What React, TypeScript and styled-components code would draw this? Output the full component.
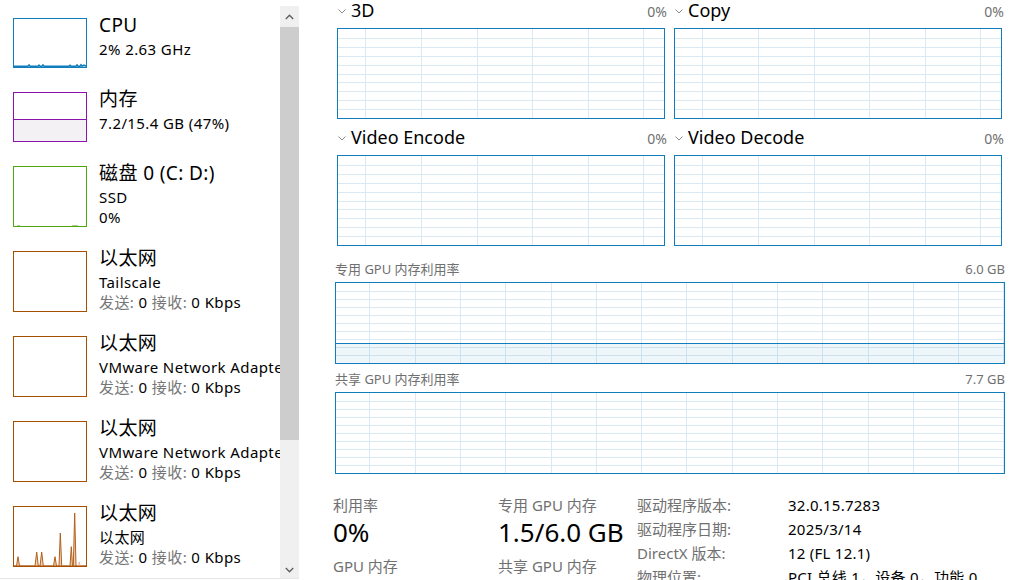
import React from "react";
import styled, { createGlobalStyle } from "styled-components";

const GlobalStyle = createGlobalStyle`
  html, body { margin: 0; padding: 0; background: #fff; }
  body {
    font-family: "Noto Sans", "Noto Sans CJK SC", sans-serif;
    color: #000;
    overflow: hidden;
  }
`;

const GRID = "#d9eaf4";
const BLUE = "#117dbb";

const Page = styled.div`
  display: flex;
  width: 1027px;
  height: 580px;
  overflow: hidden;
  background: #fff;
`;

/* ---------- Sidebar ---------- */

const Sidebar = styled.aside`
  display: flex;
  width: 299px;
  height: 572px;
  margin-top: 6px;
  border-bottom: 1px solid #e6e6e6;
  flex-shrink: 0;
`;

const List = styled.div`
  width: 280px;
  overflow: hidden;
  padding-top: 12px;
  display: flex;
  flex-direction: column;
  gap: 24px;
`;

const Item = styled.div`
  display: flex;
  align-items: flex-start;
  gap: 13px;
  padding-left: 13px;
  flex-shrink: 0;
`;

const Thumb = styled.div<{ $color: string; $h: number }>`
  width: 74px;
  height: ${(p) => p.$h}px;
  box-sizing: border-box;
  border: 1px solid ${(p) => p.$color};
  flex-shrink: 0;
  overflow: hidden;
  svg { display: block; }
`;

const Info = styled.div`
  margin-top: -6px;
  margin-left: -1px;
  display: flex;
  flex-direction: column;
  white-space: nowrap;
  min-width: 0;
`;

const Title = styled.div`
  font-size: 19px;
  line-height: 27px;
  letter-spacing: 0.4px;
`;

const Sub = styled.div`
  font-size: 15px;
  line-height: 20px;
  letter-spacing: 0.4px;
`;

const Muted = styled.span`
  color: #767676;
`;

const Scrollbar = styled.div`
  width: 19px;
  background: #f0f0f0;
  display: flex;
  flex-direction: column;
  flex-shrink: 0;
`;

const ScrollButton = styled.div<{ $h: number }>`
  height: ${(p) => p.$h}px;
  display: flex;
  align-items: center;
  justify-content: center;
  flex-shrink: 0;
`;

const ScrollThumb = styled.div`
  height: 413px;
  background: #cdcdcd;
  flex-shrink: 0;
`;

const ScrollSpacer = styled.div`
  flex: 1;
`;

/* ---------- Main ---------- */

const Main = styled.main`
  flex: 1;
  padding-left: 36px;
  display: flex;
  flex-direction: column;
`;

const Content = styled.div`
  width: 670px;
  display: flex;
  flex-direction: column;
`;

const EngineGrid = styled.div`
  display: grid;
  grid-template-columns: 330px 330px;
  column-gap: 7px;
  row-gap: 8px;
  padding-left: 2px;
`;

const Engine = styled.section`
  display: flex;
  flex-direction: column;
`;

const EngineHeader = styled.div`
  height: 28px;
  display: flex;
  align-items: baseline;
  line-height: 20px;
  svg { align-self: flex-start; margin-top: 9px; margin-left: 1px; flex-shrink: 0; }
`;

const EngineName = styled.span`
  font-size: 18px;
  margin-left: 5px;
  flex: 1;
`;

const Percent = styled.span`
  font-size: 14px;
  color: #707070;
`;

const GraphBox = styled.div<{ $w: number; $h: number }>`
  width: ${(p) => p.$w}px;
  height: ${(p) => p.$h}px;
  box-sizing: border-box;
  border: 1px solid ${BLUE};
  background: #fff;
  svg { display: block; }
`;

const MemSection = styled.section<{ $top: number }>`
  margin-top: ${(p) => p.$top}px;
  display: flex;
  flex-direction: column;
`;

const MemHeader = styled.div`
  display: flex;
  justify-content: space-between;
  font-size: 13px;
  line-height: 18px;
  color: #707070;
  margin-bottom: 4px;
`;

const Stats = styled.div`
  margin-top: 19px;
  margin-left: -2px;
  display: grid;
  grid-template-columns: 165px 139px auto;
  align-items: start;
`;

const StatCol = styled.div`
  display: flex;
  flex-direction: column;
  white-space: nowrap;
`;

const StatLabel = styled.div<{ $gap?: number }>`
  font-size: 15px;
  line-height: 24px;
  color: #707070;
  margin-top: ${(p) => p.$gap ?? 0}px;
`;

const StatValue = styled.div`
  font-size: 26px;
  line-height: 30px;
`;

const InfoGrid = styled.dl`
  margin: 0;
  display: grid;
  grid-template-columns: 151px auto;
  font-size: 15px;
  line-height: 24px;
  white-space: nowrap;
  dt { color: #707070; }
  dd { margin: 0; color: #000; letter-spacing: 0.25px; }
`;

/* ---------- Drawings ---------- */

const Chevron = ({ color = "#8a8a8a" }: { color?: string }) => (
  <svg width="8" height="5" viewBox="0 0 8 5">
    <polyline points="0.5,0.5 4,4 7.5,0.5" fill="none" stroke={color} strokeWidth="1" />
  </svg>
);

const ScrollChevron = ({ up }: { up?: boolean }) => (
  <svg width="9" height="6" viewBox="0 0 9 6">
    <polyline
      points={up ? "0.8,5 4.5,1.3 8.2,5" : "0.8,1 4.5,4.7 8.2,1"}
      fill="none"
      stroke="#606060"
      strokeWidth="1.4"
    />
  </svg>
);

type GridProps = {
  w: number;
  h: number;
  rows: number;
  colStart: number;
  colStep: number;
  fillFrac?: number;
};

const GridLines = ({ w, h, rows, colStart, colStep, fillFrac }: GridProps) => {
  const hs: number[] = [];
  for (let i = 1; i < rows; i++) hs.push(Math.round((h * i) / rows) + 0.5);
  const vs: number[] = [];
  for (let x = colStart; x < w; x += colStep) vs.push(Math.round(x) + 0.5);
  const fy = fillFrac !== undefined ? Math.round(h * (1 - fillFrac)) + 0.5 : null;
  return (
    <svg width={w} height={h} viewBox={`0 0 ${w} ${h}`}>
      {hs.map((y) => (
        <line key={"h" + y} x1={0} x2={w} y1={y} y2={y} stroke={GRID} strokeWidth="1" />
      ))}
      {vs.map((x) => (
        <line key={"v" + x} x1={x} x2={x} y1={0} y2={h} stroke={GRID} strokeWidth="1" />
      ))}
      {fy !== null && (
        <>
          <rect x={0} y={fy} width={w} height={h - fy} fill="rgba(17,125,187,0.07)" />
          <line x1={0} x2={w} y1={fy} y2={fy} stroke={BLUE} strokeWidth="1" />
        </>
      )}
    </svg>
  );
};

const CpuSpark = () => (
  <svg width="72" height="48" viewBox="0 0 72 48">
    <polyline
      points="0,47.2 14,47.2 15,46 16,47.2 24,47.2 25,46.2 26,47.2 28,47.2 29,46 30,47.2 55,47.2 56,46.3 57,47.2 62,47.2 63,46 64,47.2 66,47.2 67,45.8 68,47.2 70,46.2 72,47.2"
      fill="none"
      stroke={BLUE}
      strokeWidth="1.6"
    />
  </svg>
);

const MemFill = () => (
  <svg width="72" height="48" viewBox="0 0 72 48">
    <rect x="0" y="26" width="72" height="22" fill="#f3f1f4" />
    <line x1="0" x2="72" y1="26.5" y2="26.5" stroke="#8b12ae" strokeWidth="1" />
  </svg>
);

const DiskSpark = () => (
  <svg width="72" height="59" viewBox="0 0 72 59">
    <line x1="3" x2="6" y1="58.5" y2="58.5" stroke="#a6d38a" strokeWidth="1" />
    <line x1="58" x2="64" y1="58.5" y2="58.5" stroke="#a6d38a" strokeWidth="1" />
  </svg>
);

const EthSpikes = () => (
  <svg width="72" height="59" viewBox="0 0 72 59">
    <path
      d="M0,59 L2.5,59 L4,49.7 L5.5,59 L21,59 L22.7,45 L24.3,59 L26,59 L27.7,45 L29.3,59 L39.5,59 L41,49.7 L42.5,59 L45,59 L46.3,26 L47.7,59 L56,59 L57.3,39.7 L58.5,59 L59.3,59 L60.7,6 L62,59 L72,59 Z"
      fill="rgba(205,120,60,0.35)"
      stroke="#b3601a"
      strokeWidth="1"
      strokeLinejoin="round"
    />
    <path d="M64.5,59 L65.3,55 L66.2,59" fill="none" stroke="#e0a890" strokeWidth="0.8" />
  </svg>
);

/* ---------- Data ---------- */

const ETH = "#a74f01";

const NetLine = () => (
  <Sub>
    <Muted>发送:</Muted> 0 <Muted>接收:</Muted> 0 Kbps
  </Sub>
);

const engines = [
  { name: "3D", pct: "0%" },
  { name: "Copy", pct: "0%" },
  { name: "Video Encode", pct: "0%" },
  { name: "Video Decode", pct: "0%" },
];

export default function App() {
  return (
    <>
      <GlobalStyle />
      <Page>
        <Sidebar>
          <List>
            <Item>
              <Thumb $color={BLUE} $h={50}>
                <CpuSpark />
              </Thumb>
              <Info>
                <Title>CPU</Title>
                <Sub>2% 2.63 GHz</Sub>
              </Info>
            </Item>
            <Item>
              <Thumb $color="#8b12ae" $h={50}>
                <MemFill />
              </Thumb>
              <Info>
                <Title>内存</Title>
                <Sub>7.2/15.4 GB (47%)</Sub>
              </Info>
            </Item>
            <Item>
              <Thumb $color="#4da60c" $h={61}>
                <DiskSpark />
              </Thumb>
              <Info>
                <Title>磁盘 0 (C: D:)</Title>
                <Sub>SSD</Sub>
                <Sub>0%</Sub>
              </Info>
            </Item>
            <Item>
              <Thumb $color={ETH} $h={61} />
              <Info>
                <Title>以太网</Title>
                <Sub>Tailscale</Sub>
                <NetLine />
              </Info>
            </Item>
            <Item>
              <Thumb $color={ETH} $h={61} />
              <Info>
                <Title>以太网</Title>
                <Sub>VMware Network Adapter VMnet1</Sub>
                <NetLine />
              </Info>
            </Item>
            <Item>
              <Thumb $color={ETH} $h={61} />
              <Info>
                <Title>以太网</Title>
                <Sub>VMware Network Adapter VMnet8</Sub>
                <NetLine />
              </Info>
            </Item>
            <Item>
              <Thumb $color={ETH} $h={61}>
                <EthSpikes />
              </Thumb>
              <Info>
                <Title>以太网</Title>
                <Sub>以太网</Sub>
                <NetLine />
              </Info>
            </Item>
          </List>
          <Scrollbar>
            <ScrollButton $h={21}>
              <ScrollChevron up />
            </ScrollButton>
            <ScrollThumb />
            <ScrollSpacer />
            <ScrollButton $h={17}>
              <ScrollChevron />
            </ScrollButton>
          </Scrollbar>
        </Sidebar>

        <Main>
          <Content>
            <EngineGrid>
              {engines.map((e) => (
                <Engine key={e.name}>
                  <EngineHeader>
                    <Chevron />
                    <EngineName>{e.name}</EngineName>
                    <Percent>{e.pct}</Percent>
                  </EngineHeader>
                  <GraphBox $w={328} $h={91}>
                    <GridLines w={326} h={89} rows={10} colStart={27.3} colStep={55.6} />
                  </GraphBox>
                </Engine>
              ))}
            </EngineGrid>

            <MemSection $top={14}>
              <MemHeader>
                <span>专用 GPU 内存利用率</span>
                <span>6.0 GB</span>
              </MemHeader>
              <GraphBox $w={670} $h={82}>
                <GridLines w={668} h={80} rows={10} colStart={33.3} colStep={45.3} fillFrac={0.25} />
              </GraphBox>
            </MemSection>

            <MemSection $top={6}>
              <MemHeader>
                <span>共享 GPU 内存利用率</span>
                <span>7.7 GB</span>
              </MemHeader>
              <GraphBox $w={670} $h={82}>
                <GridLines w={668} h={80} rows={10} colStart={33.3} colStep={45.3} />
              </GraphBox>
            </MemSection>

            <Stats>
              <StatCol>
                <StatLabel>利用率</StatLabel>
                <StatValue>0%</StatValue>
                <StatLabel $gap={7}>GPU 内存</StatLabel>
              </StatCol>
              <StatCol>
                <StatLabel>专用 GPU 内存</StatLabel>
                <StatValue>1.5/6.0 GB</StatValue>
                <StatLabel $gap={7}>共享 GPU 内存</StatLabel>
              </StatCol>
              <InfoGrid>
                <dt>驱动程序版本:</dt>
                <dd>32.0.15.7283</dd>
                <dt>驱动程序日期:</dt>
                <dd>2025/3/14</dd>
                <dt>DirectX 版本:</dt>
                <dd>12 (FL 12.1)</dd>
                <dt>物理位置:</dt>
                <dd>PCI 总线 1，设备 0，功能 0</dd>
              </InfoGrid>
            </Stats>
          </Content>
        </Main>
      </Page>
    </>
  );
}
